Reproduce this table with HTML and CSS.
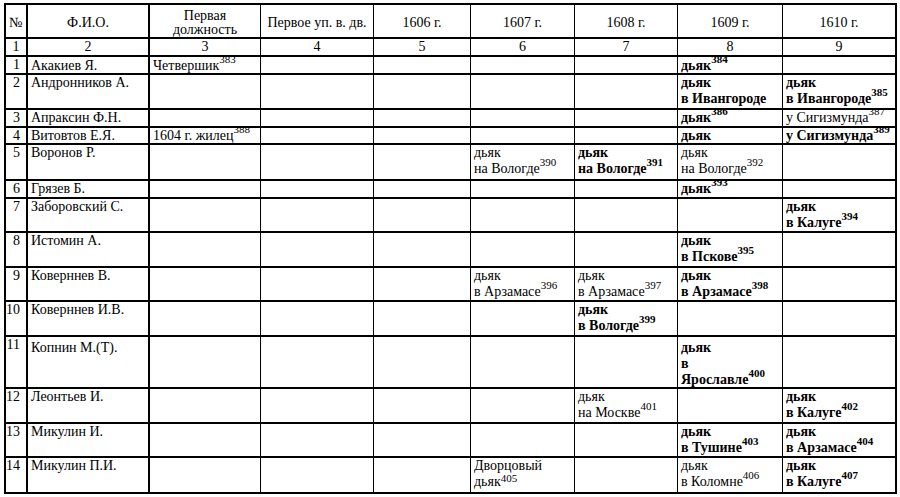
FILE: index.html
```html
<!DOCTYPE html>
<html lang="ru">
<head>
<meta charset="utf-8">
<title>Дьяки 1606–1610</title>
<link rel="stylesheet" href="styles.css">
</head>
<body>
<div class="sheet">
  <div class="row head">
    <div class="c h">№</div>
    <div class="c h">Ф.И.О.</div>
    <div class="c h">Первая<br>должность</div>
    <div class="c h">Первое уп. в. дв.</div>
    <div class="c h">1606 г.</div>
    <div class="c h">1607 г.</div>
    <div class="c h">1608 г.</div>
    <div class="c h">1609 г.</div>
    <div class="c h">1610 г.</div>
  </div>
  <div class="row nums">
    <div class="c">1</div><div class="c">2</div><div class="c">3</div><div class="c">4</div><div class="c">5</div><div class="c">6</div><div class="c">7</div><div class="c">8</div><div class="c">9</div>
  </div>
  <div class="row first">
    <div class="c num">1</div><div class="c">Акакиев Я.</div><div class="c">Четвершик<sup class="fn">383</sup></div><div class="c"></div><div class="c"></div><div class="c"></div><div class="c"></div><div class="c b">дьяк<sup class="fn">384</sup></div><div class="c"></div>
  </div>
  <div class="row">
    <div class="c num">2</div><div class="c">Андронников А.</div><div class="c"></div><div class="c"></div><div class="c"></div><div class="c"></div><div class="c"></div><div class="c b">дьяк<br>в Ивангороде</div><div class="c b">дьяк<br>в Ивангороде<sup class="fn">385</sup></div>
  </div>
  <div class="row">
    <div class="c num">3</div><div class="c">Апраксин Ф.Н.</div><div class="c"></div><div class="c"></div><div class="c"></div><div class="c"></div><div class="c"></div><div class="c b">дьяк<sup class="fn">386</sup></div><div class="c">у Сигизмунда<sup class="fn">387</sup></div>
  </div>
  <div class="row">
    <div class="c num">4</div><div class="c">Витовтов Е.Я.</div><div class="c">1604 г. жилец<sup class="fn">388</sup></div><div class="c"></div><div class="c"></div><div class="c"></div><div class="c"></div><div class="c b">дьяк</div><div class="c b">у Сигизмунда<sup class="fn">389</sup></div>
  </div>
  <div class="row">
    <div class="c num">5</div><div class="c">Воронов Р.</div><div class="c"></div><div class="c"></div><div class="c"></div><div class="c">дьяк<br>на Вологде<sup class="fn">390</sup></div><div class="c b">дьяк<br>на Вологде<sup class="fn">391</sup></div><div class="c">дьяк<br>на Вологде<sup class="fn">392</sup></div><div class="c"></div>
  </div>
  <div class="row">
    <div class="c num">6</div><div class="c">Грязев Б.</div><div class="c"></div><div class="c"></div><div class="c"></div><div class="c"></div><div class="c"></div><div class="c b">дьяк<sup class="fn">393</sup></div><div class="c"></div>
  </div>
  <div class="row">
    <div class="c num">7</div><div class="c">Заборовский С.</div><div class="c"></div><div class="c"></div><div class="c"></div><div class="c"></div><div class="c"></div><div class="c"></div><div class="c b">дьяк<br>в Калуге<sup class="fn">394</sup></div>
  </div>
  <div class="row">
    <div class="c num">8</div><div class="c">Истомин А.</div><div class="c"></div><div class="c"></div><div class="c"></div><div class="c"></div><div class="c"></div><div class="c b">дьяк<br>в Пскове<sup class="fn">395</sup></div><div class="c"></div>
  </div>
  <div class="row">
    <div class="c num">9</div><div class="c">Коверннев В.</div><div class="c"></div><div class="c"></div><div class="c"></div><div class="c">дьяк<br>в Арзамасе<sup class="fn">396</sup></div><div class="c">дьяк<br>в Арзамасе<sup class="fn">397</sup></div><div class="c b">дьяк<br>в Арзамасе<sup class="fn">398</sup></div><div class="c"></div>
  </div>
  <div class="row">
    <div class="c num">10</div><div class="c">Коверннев И.В.</div><div class="c"></div><div class="c"></div><div class="c"></div><div class="c"></div><div class="c b">дьяк<br>в Вологде<sup class="fn">399</sup></div><div class="c"></div><div class="c"></div>
  </div>
  <div class="row tall">
    <div class="c num">11</div><div class="c">Копнин М.(Т).</div><div class="c"></div><div class="c"></div><div class="c"></div><div class="c"></div><div class="c"></div><div class="c b">дьяк<br>в<br>Ярославле<sup class="fn">400</sup></div><div class="c"></div>
  </div>
  <div class="row">
    <div class="c num">12</div><div class="c">Леонтьев И.</div><div class="c"></div><div class="c"></div><div class="c"></div><div class="c"></div><div class="c">дьяк<br>на Москве<sup class="fn">401</sup></div><div class="c"></div><div class="c b">дьяк<br>в Калуге<sup class="fn">402</sup></div>
  </div>
  <div class="row">
    <div class="c num">13</div><div class="c">Микулин И.</div><div class="c"></div><div class="c"></div><div class="c"></div><div class="c"></div><div class="c"></div><div class="c b">дьяк<br>в Тушине<sup class="fn">403</sup></div><div class="c b">дьяк<br>в Арзамасе<sup class="fn">404</sup></div>
  </div>
  <div class="row">
    <div class="c num">14</div><div class="c">Микулин П.И.</div><div class="c"></div><div class="c"></div><div class="c"></div><div class="c">Дворцовый<br>дьяк<sup class="fn low">405</sup></div><div class="c"></div><div class="c">дьяк<br>в Коломне<sup class="fn">406</sup></div><div class="c b">дьяк<br>в Калуге<sup class="fn">407</sup></div>
  </div>
</div>
</body>
</html>
```

FILE: styles.css
```css
html, body {
  margin: 0;
  padding: 0;
  background: #fff;
}

body {
  font-family: "Liberation Serif", Tinos, "Times New Roman", serif;
  font-size: 14px;
  line-height: 16px;
  color: #000;
}

.sheet {
  display: grid;
  box-sizing: border-box;
  width: 893px;
  margin: 3px 0 0 4px;
  border-left: 2px solid #000;
  border-top: 2px solid #000;
  grid-template-columns: 22px 122px 111px 113px 97px 104px 103px 105px 114px;
  grid-template-rows: 34px 18px 18px 35px 18px 17px 36px 18px 34px 35px 34px 35px 52px 35px 34px 36px;
}

.row {
  display: contents;
}

.c {
  box-sizing: border-box;
  border-right: 1px solid #000;
  border-bottom: 2px solid #000;
  padding: 0 2px 0 3px;
  white-space: nowrap;
}

.row > .c:nth-child(1),
.row > .c:nth-child(2),
.row > .c:nth-child(9) {
  border-right-width: 2px;
}

.h {
  display: flex;
  align-items: center;
  justify-content: center;
  text-align: center;
  line-height: 14px;
  padding: 3px 0 0 0;
}

.nums .c {
  text-align: center;
  padding: 0;
}

.first .c {
  padding-top: 1px;
}

.tall .c {
  padding-top: 3px;
}

.c.num {
  text-align: right;
  padding: 0 6px 0 0;
}

.tall .c.num,
.first .c.num {
  padding-right: 6px;
}

.b {
  font-weight: bold;
}

.fn {
  font-size: 11px;
  line-height: 0;
  vertical-align: 7px;
}

.fn.low {
  vertical-align: 4px;
}
```
